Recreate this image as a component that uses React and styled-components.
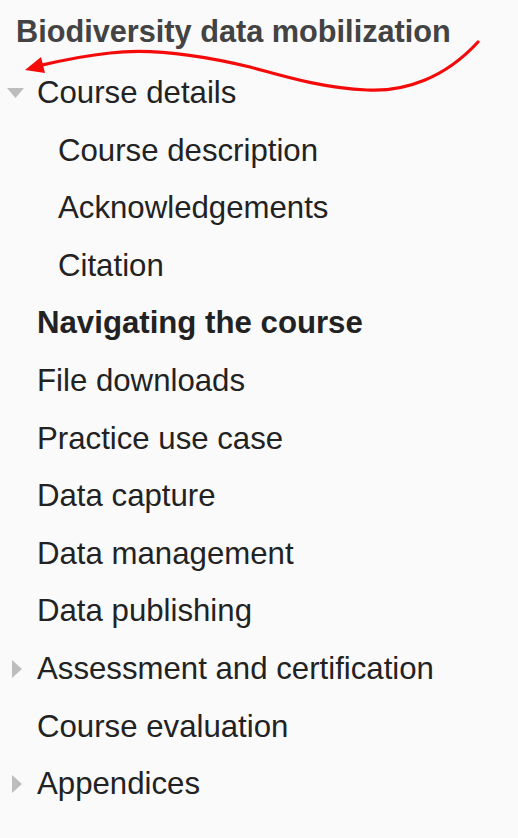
import React from 'react';
import styled, { createGlobalStyle } from 'styled-components';

const GlobalStyle = createGlobalStyle`
  html, body {
    margin: 0;
    padding: 0;
    background: #fafafa;
  }
  body {
    font-family: 'Liberation Sans', Arial, Helvetica, sans-serif;
    color: #222;
  }
`;

const MENU = [
  {
    label: 'Course details',
    toggle: 'open',
    children: ['Course description', 'Acknowledgements', 'Citation'],
  },
  { label: 'Navigating the course', bold: true },
  { label: 'File downloads' },
  { label: 'Practice use case' },
  { label: 'Data capture' },
  { label: 'Data management' },
  { label: 'Data publishing' },
  { label: 'Assessment and certification', toggle: 'closed' },
  { label: 'Course evaluation' },
  { label: 'Appendices', toggle: 'closed' },
];

function Caret({ toggle }) {
  if (toggle === 'open') {
    return (
      <CaretSlot>
        <svg width="18" height="10" viewBox="0 0 18 10" style={{ marginLeft: 7 }}>
          <polygon points="0,0 17,0 8.5,10" fill="#bdbdbd" />
        </svg>
      </CaretSlot>
    );
  }
  if (toggle === 'closed') {
    return (
      <CaretSlot>
        <svg width="11" height="18" viewBox="0 0 11 18" style={{ marginLeft: 12 }}>
          <polygon points="0,0 10,9 0,18" fill="#bdbdbd" />
        </svg>
      </CaretSlot>
    );
  }
  return <CaretSlot />;
}

function App() {
  return (
    <Page>
      <GlobalStyle />
      <Title>Biodiversity data mobilization</Title>
      <Menu>
        {MENU.map((item, index) => (
          <li key={index}>
            <Row>
              <Caret toggle={item.toggle} />
              <Label bold={item.bold}>{item.label}</Label>
            </Row>
            {item.children && (
              <SubMenu>
                {item.children.map((child, i) => (
                  <li key={i}>
                    <Row>
                      <CaretSlot />
                      <Label>{child}</Label>
                    </Row>
                  </li>
                ))}
              </SubMenu>
            )}
          </li>
        ))}
      </Menu>
      <Annotation width="518" height="120" viewBox="0 0 518 120">
        <path
          d="M478,42 C445,78 405,92 367,90 C320,88 280,75 250,67 C200,55 150,48 110,53 C80,56 55,62 38,66"
          fill="none"
          stroke="#f50a0a"
          strokeWidth="3.2"
          strokeLinecap="round"
        />
        <polygon points="25,70 41,57 45,73" fill="#f50a0a" />
      </Annotation>
    </Page>
  );
}

const Page = styled.div`
  position: relative;
  width: 518px;
  height: 838px;
  overflow: hidden;
`;

const Title = styled.h1`
  margin: 0;
  padding: 12px 0 0 16px;
  font-size: 30.7px;
  line-height: 40px;
  font-weight: bold;
  color: #434343;
`;

const Menu = styled.ul`
  list-style: none;
  margin: 12px 0 0;
  padding: 0;
`;

const SubMenu = styled.ul`
  list-style: none;
  margin: 0;
  padding: 0 0 0 21px;
`;

const Row = styled.div`
  display: flex;
  align-items: center;
  height: 57.6px;
`;

const CaretSlot = styled.span`
  display: flex;
  align-items: center;
  flex: 0 0 37px;
  width: 37px;
`;

const Label = styled.span`
  font-size: 31.2px;
  line-height: 57.6px;
  font-weight: ${props => (props.bold ? 'bold' : 'normal')};
  color: #222;
  white-space: nowrap;
`;

const Annotation = styled.svg`
  position: absolute;
  top: 0;
  left: 0;
  pointer-events: none;
`;

export default App;
